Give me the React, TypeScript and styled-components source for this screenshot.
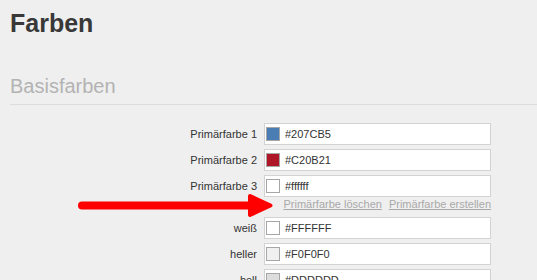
import React from "react";
import styled, { createGlobalStyle } from "styled-components";

const GlobalStyle = createGlobalStyle`
  html, body { margin: 0; padding: 0; background: #efefef; }
  body { font-family: "Liberation Sans", Arial, sans-serif; color: #333; }
`;

const Page = styled.div`
  position: relative;
  width: 537px;
  height: 280px;
  overflow: hidden;
  padding-left: 10px;
  box-sizing: border-box;
`;

const Title = styled.h1`
  margin: 8px 0 0;
  font-size: 25px;
  line-height: 30px;
  font-weight: bold;
  color: #383838;
`;

const SectionTitle = styled.h2`
  margin: 36px 0 0;
  padding-bottom: 6px;
  font-size: 20px;
  line-height: 24px;
  font-weight: normal;
  color: #b3b3b3;
  border-bottom: 1px solid #dcdcdc;
`;

const Form = styled.div`
  display: flex;
  flex-direction: column;
  gap: 4px;
  margin-top: 18px;
`;

const Row = styled.div`
  display: grid;
  grid-template-columns: 247px 227px;
  column-gap: 7px;
  align-items: center;
`;

const Label = styled.label`
  text-align: right;
  font-size: 11px;
  color: #333;
`;

const Field = styled.div`
  height: 22px;
  box-sizing: border-box;
  border: 1px solid #d3d3d3;
  background: #fff;
  display: flex;
  align-items: center;
  padding: 0 1px;
  gap: 5px;
`;

const Swatch = styled.span<{ $color: string }>`
  width: 14px;
  height: 14px;
  box-sizing: border-box;
  border: 1px solid #a6a6a6;
  background: ${(p) => p.$color};
  flex: none;
`;

const Value = styled.span`
  font-size: 11px;
  color: #333;
`;

const LinksRow = styled.div`
  grid-column: 2;
  display: flex;
  justify-content: flex-end;
  gap: 7px;
  margin: -3px 0 2px;
  line-height: 13px;
`;

const ActionLink = styled.a`
  font-size: 11px;
  color: #a9a9a9;
  text-decoration: underline;
  cursor: pointer;
`;

const Arrow = styled.svg`
  position: absolute;
  left: 0;
  top: 0;
  pointer-events: none;
`;

const colors = [
  { label: "Primärfarbe 1", value: "#207CB5", swatch: "#4a7db3" },
  { label: "Primärfarbe 2", value: "#C20B21", swatch: "#ad1727" },
  { label: "Primärfarbe 3", value: "#ffffff", swatch: "#ffffff" },
];

const base = [
  { label: "weiß", value: "#FFFFFF", swatch: "#ffffff" },
  { label: "heller", value: "#F0F0F0", swatch: "#f0f0f0" },
  { label: "hell", value: "#DDDDDD", swatch: "#dddddd" },
];

function ColorRow({ label, value, swatch }: { label: string; value: string; swatch: string }) {
  return (
    <Row>
      <Label>{label}</Label>
      <Field>
        <Swatch $color={swatch} />
        <Value>{value}</Value>
      </Field>
    </Row>
  );
}

export default function App() {
  return (
    <>
      <GlobalStyle />
      <Page>
        <Title>Farben</Title>
        <SectionTitle>Basisfarben</SectionTitle>
        <Form>
          {colors.map((c) => (
            <ColorRow key={c.label} {...c} />
          ))}
          <Row>
            <LinksRow>
              <ActionLink>Primärfarbe löschen</ActionLink>
              <ActionLink>Primärfarbe erstellen</ActionLink>
            </LinksRow>
          </Row>
          {base.map((c) => (
            <ColorRow key={c.label} {...c} />
          ))}
        </Form>
        <Arrow width="537" height="280" viewBox="0 0 537 280">
          <line x1="82" y1="205.5" x2="254" y2="205.5" stroke="#ff0000" strokeWidth="8" strokeLinecap="round" />
          <polygon
            points="250,196 270.5,205.5 250,215"
            fill="#ff0000"
            stroke="#ff0000"
            strokeWidth="4"
            strokeLinejoin="round"
          />
        </Arrow>
      </Page>
    </>
  );
}
